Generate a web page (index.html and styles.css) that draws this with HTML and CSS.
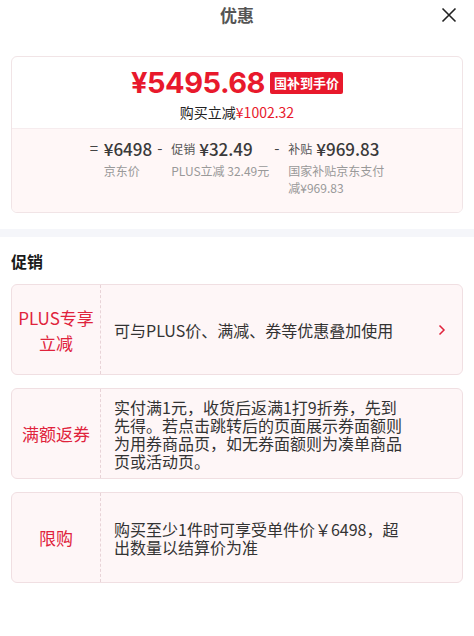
FILE: index.html
```html
<!DOCTYPE html>
<html lang="zh-CN">
<head>
    <meta charset="UTF-8">
    <link rel="stylesheet" href="styles.css">
    <title>优惠</title>
</head>
<body>

<div class="header">
    <span></span>
    <h1 class="title">优惠</h1>
    <button class="close" type="button" aria-label="关闭">
        <svg width="16" height="16" viewBox="0 0 16 16"><path d="M1.5 1.5 L14.5 14.5 M14.5 1.5 L1.5 14.5" stroke="#222" stroke-width="1.6" fill="none"/></svg>
    </button>
</div>

<div class="summary">
    <div class="summary-top">
        <div class="price-line">
            <span class="price">¥5495.68</span>
            <span class="badge">国补到手价</span>
        </div>
        <div class="save-line">购买立减<span class="red">¥1002.32</span></div>
    </div>
    <div class="summary-bottom">
        <div class="calc">
            <span class="op">=</span>
            <div class="calc-body">
                <div class="calc-top"><span class="amount">¥6498</span></div>
                <div class="calc-sub">京东价</div>
            </div>
        </div>
        <div class="calc">
            <span class="op">-</span>
            <div class="calc-body">
                <div class="calc-top"><span class="tag">促销</span><span class="amount">¥32.49</span></div>
                <div class="calc-sub">PLUS立减 32.49元</div>
            </div>
        </div>
        <div class="calc">
            <span class="op">-</span>
            <div class="calc-body narrow">
                <div class="calc-top"><span class="tag">补贴</span><span class="amount">¥969.83</span></div>
                <div class="calc-sub">国家补贴京东支付减¥969.83</div>
            </div>
        </div>
    </div>
</div>

<div class="band"></div>

<h2 class="section-title">促销</h2>

<div class="promo-list">
    <div class="promo">
        <div class="promo-label">PLUS专享<br>立减</div>
        <div class="promo-text">可与PLUS价、满减、券等优惠叠加使用</div>
        <span class="promo-arrow">
            <svg width="8" height="12" viewBox="0 0 8 12"><path d="M1.5 1.5 L6 6 L1.5 10.5" stroke="#e0233c" stroke-width="1.5" fill="none"/></svg>
        </span>
    </div>
    <div class="promo">
        <div class="promo-label">满额返券</div>
        <div class="promo-text">实付满1元，收货后返满1打9折券，先到先得。若点击跳转后的页面展示券面额则为用券商品页，如无券面额则为凑单商品页或活动页。</div>
        <span class="promo-arrow"></span>
    </div>
    <div class="promo">
        <div class="promo-label">限购</div>
        <div class="promo-text">购买至少1件时可享受单件价￥6498，超出数量以结算价为准</div>
        <span class="promo-arrow"></span>
    </div>
</div>

</body>
</html>
```

FILE: styles.css
```css
body {
    margin: 0;
    background-color: #fff;
    font-family: "Noto Sans CJK SC", "Noto Sans", sans-serif;
    color: #333;
}

.header {
    display: grid;
    grid-template-columns: 1fr auto 1fr;
    align-items: center;
    height: 30px;
}

.title {
    margin: 0;
    font-size: 17px;
    font-weight: bold;
    color: #555;
    line-height: 30px;
}

.close {
    justify-self: end;
    margin-right: 17px;
    padding: 0;
    border: none;
    background: none;
    display: flex;
}

.summary {
    margin: 26px 11px 0;
    border: 1px solid #f1e4e6;
    border-radius: 6px;
    overflow: hidden;
}

.summary-top {
    display: flex;
    flex-direction: column;
    align-items: center;
    height: 71px;
    border-bottom: 1px solid #f6ecee;
}

.price-line {
    display: flex;
    align-items: center;
    margin-top: 9px;
    height: 34px;
}

.price {
    font-family: Inter, "Noto Sans", sans-serif;
    font-size: 29px;
    font-weight: bold;
    line-height: 34px;
    color: #e8192c;
    letter-spacing: -0.5px;
}

.badge {
    margin-left: 5px;
    padding: 0 4px;
    background-color: #e8192c;
    color: #fff;
    font-size: 13px;
    font-weight: bold;
    line-height: 22px;
    border-radius: 2px;
}

.save-line {
    font-size: 14px;
    line-height: 18px;
    color: #222;
    margin-top: 3px;
}

.red {
    color: #e8192c;
}

.summary-bottom {
    display: flex;
    justify-content: center;
    gap: 5px;
    background-color: #fff7f7;
    padding: 7px 0 12px;
    height: 64px;
}

.calc {
    display: flex;
    align-items: flex-start;
}

.op {
    font-size: 15px;
    color: #444;
    line-height: 24px;
    width: 14px;
}

.calc-top {
    display: flex;
    align-items: center;
    height: 24px;
}

.tag {
    font-size: 12px;
    color: #555;
    margin-right: 4px;
}

.amount {
    font-size: 17px;
    font-weight: 500;
    color: #3a3a3a;
}

.calc-sub {
    font-size: 12px;
    color: #999;
    line-height: 17px;
    margin-top: 2px;
}

.narrow {
    width: 96px;
}

.band {
    height: 8px;
    margin-top: 16px;
    background-color: #f5f6fa;
}

.section-title {
    margin: 12px 11px 0;
    font-size: 16px;
    font-weight: bold;
    color: #1a1a1a;
    line-height: 24px;
}

.promo-list {
    display: flex;
    flex-direction: column;
    gap: 13px;
    margin: 11px 11px 0;
}

.promo {
    display: flex;
    align-items: stretch;
    min-height: 89px;
    border: 1px solid #f0dfe2;
    border-radius: 6px;
    background-color: #fef6f7;
}

.promo-label {
    width: 88px;
    flex-shrink: 0;
    display: flex;
    align-items: center;
    justify-content: center;
    text-align: center;
    border-right: 1px dashed #e8d3d7;
    font-size: 17px;
    line-height: 25px;
    color: #e0233c;
}

.promo-text {
    flex: 1;
    display: flex;
    align-items: center;
    padding: 8px 0 8px 13px;
    font-size: 16px;
    line-height: 18px;
    color: #333;
    max-width: 293px;
}

.promo-arrow {
    margin-left: auto;
    width: 40px;
    display: flex;
    align-items: center;
    justify-content: center;
}
```
